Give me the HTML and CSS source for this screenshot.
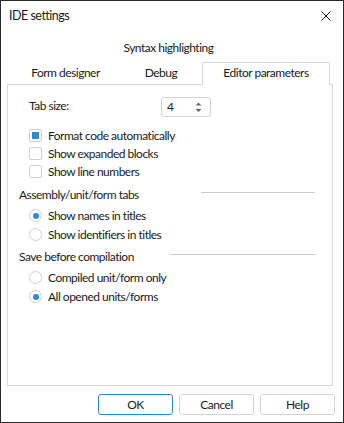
FILE: index.html
```html
<!DOCTYPE html>
<html>
<head>
<meta charset="utf-8">
<link rel="stylesheet" href="styles.css">
</head>
<body>
<div class="window">
  <div class="titlebar">
    <span class="title">IDE settings</span>
    <svg class="close" width="10" height="10" viewBox="0 0 10 10"><path d="M0.5 0.5 L9.5 9.5 M9.5 0.5 L0.5 9.5" stroke="#1a1a1a" stroke-width="1" fill="none"/></svg>
  </div>
  <div class="tabs">
    <div class="tabrow back">
      <div class="tab tab-full">Syntax highlighting</div>
    </div>
    <div class="tabrow front">
      <div class="tab tab-form">Form designer</div>
      <div class="tab tab-debug">Debug</div>
      <div class="tab tab-active">Editor parameters</div>
    </div>
  </div>
  <div class="panel">
    <div class="field-row">
      <span class="field-label">Tab size:</span>
      <div class="spin">
        <span class="spin-value">4</span>
        <svg class="spin-arrows" width="7" height="11" viewBox="0 0 7 11"><path d="M3.5 0.5 L6.5 3.5 L0.5 3.5 Z M0.5 7 L6.5 7 L3.5 10 Z" fill="#6a6a6a"/></svg>
      </div>
    </div>
    <div class="options">
      <div class="opt"><span class="check checked"></span><span>Format code automatically</span></div>
      <div class="opt"><span class="check"></span><span>Show expanded blocks</span></div>
      <div class="opt"><span class="check"></span><span>Show line numbers</span></div>
    </div>
    <div class="section section-tabs"><span>Assembly/unit/form tabs</span><span class="rule"></span></div>
    <div class="radios">
      <div class="opt radio-opt"><span class="radio checked"></span><span>Show names in titles</span></div>
      <div class="opt radio-opt"><span class="radio"></span><span>Show identifiers in titles</span></div>
    </div>
    <div class="section section-save"><span>Save before compilation</span><span class="rule"></span></div>
    <div class="radios">
      <div class="opt radio-opt"><span class="radio"></span><span>Compiled unit/form only</span></div>
      <div class="opt radio-opt"><span class="radio checked"></span><span>All opened units/forms</span></div>
    </div>
  </div>
  <div class="buttons">
    <button class="btn btn-default">OK</button>
    <button class="btn">Cancel</button>
    <button class="btn">Help</button>
  </div>
</div>
</body>
</html>
```
FILE: styles.css
```css
* { box-sizing: border-box; }
html, body { margin: 0; padding: 0; background: #ffffff; }
body {
  font-family: "Lato", "Noto Sans", sans-serif;
  font-size: 12px;
  letter-spacing: -0.5px;
  color: #1b1b1b;
}
.window {
  width: 344px;
  height: 423px;
  border: 1px solid #2b2b2b;
  background: #ffffff;
  display: flex;
  flex-direction: column;
}
.titlebar {
  height: 30px;
  display: flex;
  align-items: center;
  justify-content: space-between;
  padding: 0 12px 0 8px;
}
.title { font-size: 12.5px; line-height: 30px; }
.close { display: block; margin-top: -1px; }

.tabs { padding: 6px 0 0 6px; }
.tabrow { display: flex; }
.tabrow.back { height: 22px; }
.tabrow.front { margin-top: 3px; height: 22px; position: relative; z-index: 1; }
.tab {
  text-align: center;
  line-height: 19px;
  padding-top: 1px;
  white-space: nowrap;
}
.tab-full { width: 323px; line-height: 22px; padding-top: 0; }
.tab-form { width: 117px; }
.tab-debug { width: 74px; }
.tab-active {
  margin-left: 4px;
  width: 128px;
  height: 23px;
  padding-top: 0;
  border: 1px solid #d9d9d9;
  border-bottom: none;
  background: #ffffff;
}

.panel {
  margin-left: 6px;
  width: 326px;
  height: 302px;
  border: 1px solid #d9d9d9;
  padding: 12px 0 0 0;
}
.field-row {
  display: flex;
  padding-left: 21px;
  height: 20px;
}
.field-label { width: 132px; line-height: 18px; }
.spin {
  width: 50px;
  height: 20px;
  border: 1px solid #d4d4d4;
  border-radius: 3px;
  display: flex;
  align-items: center;
  justify-content: space-between;
  padding: 0 8px 0 5px;
}
.spin-value { line-height: 18px; }
.spin-arrows { display: block; }

.options { margin-top: 9px; padding-left: 21px; }
.opt {
  display: flex;
  align-items: center;
  height: 18px;
  white-space: nowrap;
}
.check {
  width: 13px;
  height: 13px;
  border: 1px solid #cfcfcf;
  border-radius: 2px;
  margin-right: 6px;
  display: flex;
  align-items: center;
  justify-content: center;
  flex: none;
}
.check.checked::after {
  content: "";
  width: 7px;
  height: 7px;
  background: #2b8ad6;
}
.radios { padding-left: 21px; margin-top: 3px; }
.radio-opt { height: 19px; }
.radio {
  width: 13px;
  height: 13px;
  border: 1px solid #cfcfcf;
  border-radius: 50%;
  margin-right: 6px;
  display: flex;
  align-items: center;
  justify-content: center;
  flex: none;
}
.radio.checked::after {
  content: "";
  width: 6px;
  height: 6px;
  border-radius: 50%;
  background: #2b8ad6;
}

.section {
  display: flex;
  align-items: center;
  height: 18px;
  padding-left: 11px;
  margin-top: 5px;
  white-space: nowrap;
}
.section-save { margin-top: 3px; }
.rule {
  height: 1px;
  background: #cdcdcd;
  margin-top: -3px;
}
.section-tabs .rule { margin-left: auto; margin-right: 17px; width: 114px; }
.section-save .rule { margin-left: auto; margin-right: 16px; width: 146px; }

.buttons {
  margin-top: 8px;
  display: flex;
  justify-content: flex-end;
  gap: 6px;
  padding-right: 8px;
}
.btn {
  width: 75px;
  height: 21px;
  border: 1px solid #d4d4d4;
  border-radius: 3px;
  background: #ffffff;
  font-family: inherit;
  font-size: 12px;
  letter-spacing: inherit;
  color: #1b1b1b;
  padding: 0;
  line-height: 19px;
}
.btn-default { border-color: #2f86cc; }
```
